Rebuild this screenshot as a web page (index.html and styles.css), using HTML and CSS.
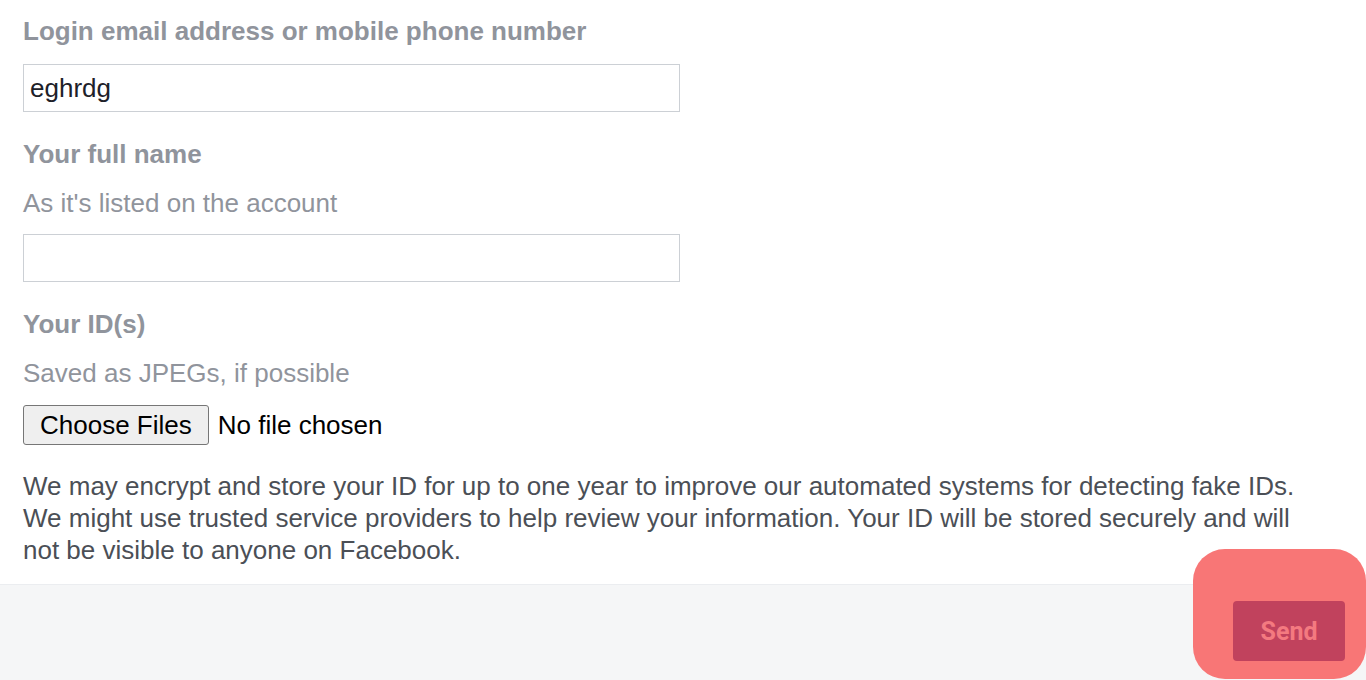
FILE: index.html
```html
<!DOCTYPE html>
<html lang="en">
<head>
  <meta charset="UTF-8" />
  <meta name="viewport" content="width=device-width, initial-scale=1.0" />
  <title>Confirm your identity</title>
  <link rel="stylesheet" href="styles.css">
</head>
<body>
  <form class="form" onsubmit="return false">
    <div class="form-body">
      <label class="label" for="login">Login email address or mobile phone number</label>
      <input class="field" type="text" id="login" value="eghrdg" />

      <label class="label label-gap" for="fullname">Your full name</label>
      <div class="hint">As it's listed on the account</div>
      <input class="field field-hinted" type="text" id="fullname" />

      <label class="label label-gap">Your ID(s)</label>
      <div class="hint">Saved as JPEGs, if possible</div>
      <div class="file-row">
        <button type="button" class="file-btn">Choose Files</button>
        <span class="file-name">No file chosen</span>
      </div>

      <p class="notice">We may encrypt and store your ID for up to one year to improve our automated systems for detecting fake IDs.<br>We might use trusted service providers to help review your information. Your ID will be stored securely and will not be visible to anyone on Facebook.</p>
    </div>

    <div class="form-footer">
      <div class="highlight"></div>
      <button type="submit" class="send-btn">Send</button>
    </div>
  </form>
</body>
</html>
```

FILE: styles.css
```css
:root {
  --texto-gris: #90949c;
  --texto-oscuro: #4b4f56;
  --borde: #ccd0d5;
  --fondo-pie: #f5f6f7;
}

* {
  box-sizing: border-box;
}

body {
  margin: 0;
  font-family: "Liberation Sans", Arial, sans-serif;
  background: #fff;
  overflow: hidden;
}

.form-body {
  padding: 16px 23px 0;
}

.label {
  display: block;
  font-size: 26px;
  line-height: 30px;
  font-weight: bold;
  color: var(--texto-gris);
}

.label-gap {
  margin-top: 27px;
}

.hint {
  margin-top: 19px;
  font-size: 26px;
  line-height: 30px;
  color: var(--texto-gris);
}

.field {
  display: block;
  width: 657px;
  height: 48px;
  margin-top: 18px;
  padding: 0 6px;
  border: 1px solid var(--borde);
  border-radius: 0;
  font-family: inherit;
  font-size: 26px;
  color: #1d2129;
  outline: none;
}

.field-hinted {
  margin-top: 16px;
}

.file-row {
  display: flex;
  align-items: center;
  gap: 9px;
  margin-top: 17px;
}

.file-btn {
  height: 40px;
  padding: 0 16px;
  border: 1px solid #767676;
  border-radius: 3px;
  background: #efefef;
  font-family: inherit;
  font-size: 26px;
  color: #000;
}

.file-name {
  font-size: 26px;
  color: #000;
}

.notice {
  max-width: 1300px;
  margin: 25px 0 0;
  font-size: 26px;
  line-height: 32px;
  color: var(--texto-oscuro);
}

.form-footer {
  position: relative;
  display: flex;
  justify-content: flex-end;
  margin-top: 18px;
  padding: 16px 21px 0;
  height: 96px;
  border-top: 1px solid #ebedf0;
  background: var(--fondo-pie);
}

.highlight {
  position: absolute;
  left: 1193px;
  top: -36px;
  width: 173px;
  height: 130px;
  border-radius: 32px;
  background: #f87676;
}

.send-btn {
  position: relative;
  width: 112px;
  height: 60px;
  border: none;
  border-radius: 4px;
  background: #c1425d;
  font-family: Roboto, "Liberation Sans", sans-serif;
  font-size: 25px;
  font-weight: bold;
  color: #f47a80;
}
```
